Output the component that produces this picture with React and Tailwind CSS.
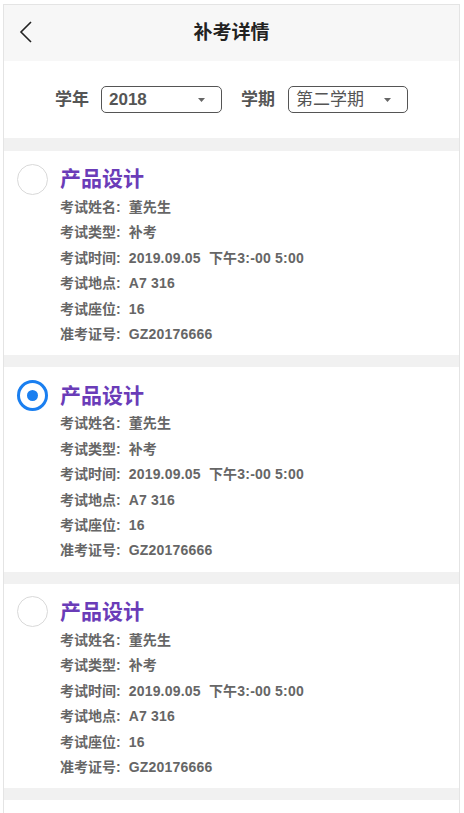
import React, { useState } from "react";

const exams = [1, 2, 3, 4].map((id) => ({
  id,
  title: "产品设计",
  rows: [
    ["考试姓名", "董先生"],
    ["考试类型", "补考"],
    ["考试时间", "2019.09.05  下午3:-00 5:00"],
    ["考试地点", "A7 316"],
    ["考试座位", "16"],
    ["准考证号", "GZ20176666"],
  ],
}));

const Caret = () => (
  <svg width="7" height="4" viewBox="0 0 7 4" className="ml-auto">
    <path d="M0 0h7L3.5 4z" fill="#666" />
  </svg>
);

const Select = ({ value, bold, width }) => (
  <div
    className={`flex items-center h-[27px] ${width} border border-[#555] rounded-[5px] pl-[7px] pr-[16px] text-[17px] text-[#555] ${
      bold ? "font-bold" : ""
    }`}
  >
    <span>{value}</span>
    <Caret />
  </div>
);

const Radio = ({ checked }) =>
  checked ? (
    <div className="w-[31px] h-[31px] shrink-0 rounded-full border-[3px] border-[#1a7ff0] flex items-center justify-center">
      <div className="w-[11px] h-[11px] rounded-full bg-[#1a7ff0]" />
    </div>
  ) : (
    <div className="w-[31px] h-[31px] shrink-0 rounded-full border border-[#d9d9d9]" />
  );

const App = () => {
  const [selected, setSelected] = useState(2);

  return (
    <div
      className="h-screen overflow-hidden bg-white pt-[4px] pl-[3px] pr-[4px]"
      style={{ fontFamily: '"Liberation Sans", "Noto Sans CJK SC", sans-serif' }}
    >
      <div className="h-full overflow-hidden border-x border-t border-[#e4e4e4] bg-[#f1f1f1]">
        {/* Header */}
        <div className="relative h-[56px] bg-[#f7f7f7] flex items-center justify-center">
          <button className="absolute left-[14px] top-[15px] p-0">
            <svg width="16" height="24" viewBox="0 0 16 24">
              <path d="M13 2L3 12l10 10" fill="none" stroke="#222" strokeWidth="1.6" />
            </svg>
          </button>
          <h1 className="text-[19px] font-bold text-[#222]">补考详情</h1>
        </div>

        {/* Filter */}
        <div className="h-[77px] bg-white flex items-center justify-center text-[#555]">
          <span className="text-[17px] font-bold mr-[12px]">学年</span>
          <Select value="2018" bold width="w-[121px]" />
          <span className="text-[17px] font-bold ml-[19px] mr-[13px]">学期</span>
          <Select value="第二学期" width="w-[120px]" />
        </div>

        {/* List */}
        <div className="pt-[13px] flex flex-col gap-[12px]">
          {exams.map((exam) => (
            <div
              key={exam.id}
              onClick={() => setSelected(exam.id)}
              className="bg-white pl-[13px] pt-[12px] pb-[8px]"
            >
              <div className="flex items-center gap-[12px] h-[32px]">
                <Radio checked={selected === exam.id} />
                <span className="text-[21px] font-bold text-[#6a3cb8]">{exam.title}</span>
              </div>
              <div className="pl-[43px] text-[14px] font-bold text-[#666] leading-[25.4px]">
                {exam.rows.map(([label, value]) => (
                  <div key={label} className="flex whitespace-pre">
                    <span>{label}:</span>
                    <span className="ml-[8px] tracking-[0.2px]">{value}</span>
                  </div>
                ))}
              </div>
            </div>
          ))}
        </div>
      </div>
    </div>
  );
};

export default App;
